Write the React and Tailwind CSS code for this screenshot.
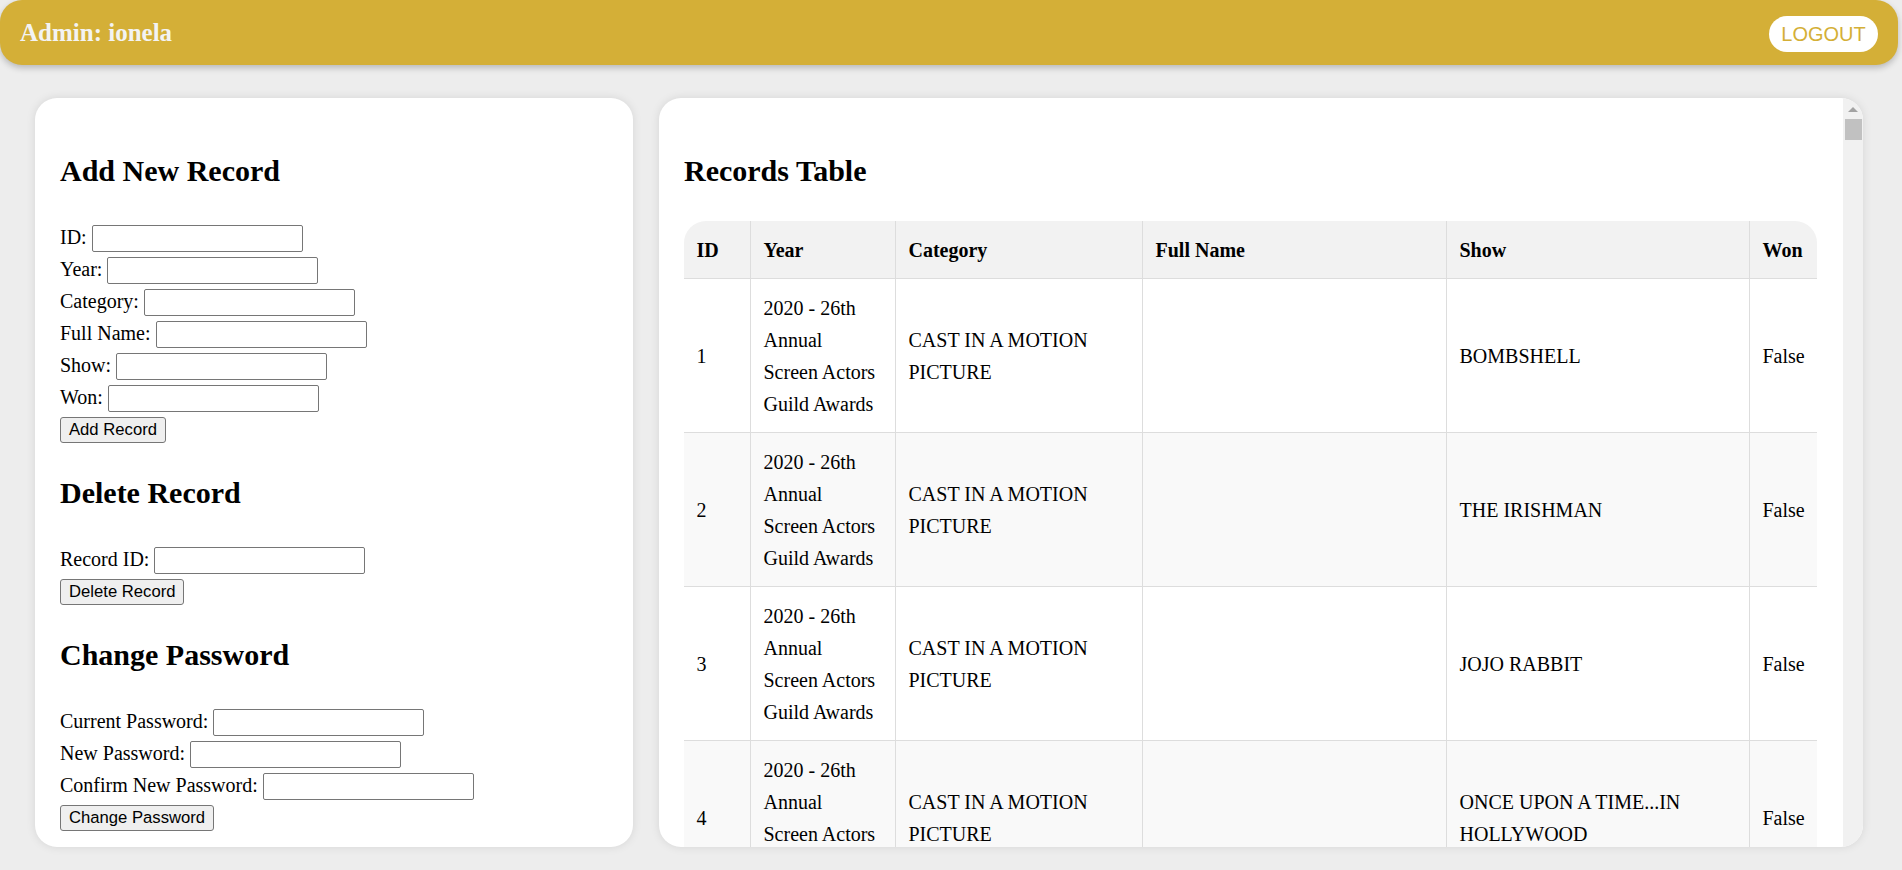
import React from "react";

const CEREMONY = "2020 - 26th Annual Screen Actors Guild Awards";

const raw = [
  ["CAST IN A MOTION PICTURE", "", "BOMBSHELL", "False"],
  ["CAST IN A MOTION PICTURE", "", "THE IRISHMAN", "False"],
  ["CAST IN A MOTION PICTURE", "", "JOJO RABBIT", "False"],
  ["CAST IN A MOTION PICTURE", "", "ONCE UPON A TIME...IN HOLLYWOOD", "False"],
  ["CAST IN A MOTION PICTURE", "", "PARASITE", "True"],
  ["MALE ACTOR IN A LEADING ROLE", "Christian Bale", "Ford v Ferrari", "False"],
  ["MALE ACTOR IN A LEADING ROLE", "Leonardo DiCaprio", "Once Upon a Time...in Hollywood", "False"],
  ["MALE ACTOR IN A LEADING ROLE", "Adam Driver", "Marriage Story", "False"],
  ["MALE ACTOR IN A LEADING ROLE", "Taron Egerton", "Rocketman", "False"],
  ["MALE ACTOR IN A LEADING ROLE", "Joaquin Phoenix", "Joker", "True"],
  ["FEMALE ACTOR IN A LEADING ROLE", "Cynthia Erivo", "Harriet", "False"],
  ["FEMALE ACTOR IN A LEADING ROLE", "Scarlett Johansson", "Marriage Story", "False"],
  ["FEMALE ACTOR IN A LEADING ROLE", "Lupita Nyong'o", "Us", "False"],
  ["FEMALE ACTOR IN A LEADING ROLE", "Charlize Theron", "Bombshell", "False"],
  ["FEMALE ACTOR IN A LEADING ROLE", "Renée Zellweger", "Judy", "True"],
  ["MALE ACTOR IN A SUPPORTING ROLE", "Jamie Foxx", "Just Mercy", "False"],
  ["MALE ACTOR IN A SUPPORTING ROLE", "Tom Hanks", "A Beautiful Day in the Neighborhood", "False"],
  ["MALE ACTOR IN A SUPPORTING ROLE", "Al Pacino", "The Irishman", "False"],
  ["MALE ACTOR IN A SUPPORTING ROLE", "Joe Pesci", "The Irishman", "False"],
  ["MALE ACTOR IN A SUPPORTING ROLE", "Brad Pitt", "Once Upon a Time...in Hollywood", "True"],
  ["FEMALE ACTOR IN A SUPPORTING ROLE", "Laura Dern", "Marriage Story", "True"],
  ["FEMALE ACTOR IN A SUPPORTING ROLE", "Scarlett Johansson", "Jojo Rabbit", "False"],
  ["FEMALE ACTOR IN A SUPPORTING ROLE", "Nicole Kidman", "Bombshell", "False"],
  ["FEMALE ACTOR IN A SUPPORTING ROLE", "Jennifer Lopez", "Hustlers", "False"],
  ["FEMALE ACTOR IN A SUPPORTING ROLE", "Margot Robbie", "Bombshell", "False"],
  ["STUNT ENSEMBLE IN A MOTION PICTURE", "", "AVENGERS: ENDGAME", "True"],
  ["STUNT ENSEMBLE IN A MOTION PICTURE", "", "FORD V FERRARI", "False"],
  ["STUNT ENSEMBLE IN A MOTION PICTURE", "", "THE IRISHMAN", "False"],
  ["STUNT ENSEMBLE IN A MOTION PICTURE", "", "JOKER", "False"],
  ["STUNT ENSEMBLE IN A MOTION PICTURE", "", "ONCE UPON A TIME...IN HOLLYWOOD", "False"],
];

const rows = raw.map((r, i) => ({
  id: i + 1,
  year: CEREMONY,
  category: r[0],
  name: r[1],
  show: r[2],
  won: r[3],
}));

const Field = ({ label }) => (
  <div className="flex h-[32px] items-center gap-[5px]">
    <span className="whitespace-nowrap pb-[3px]">{label}</span>
    <input
      type="text"
      className="h-[27px] w-[211px] rounded-[2px] border border-[#767676] bg-white px-[2px] outline-none"
    />
  </div>
);

const Btn = ({ children }) => (
  <div className="flex h-[32px] items-center">
    <button className="h-[26px] rounded-[3px] border border-[#767676] bg-[#efefef] px-[8px] font-['Liberation_Sans',Arial,sans-serif] text-[16.67px] leading-none text-black">
      {children}
    </button>
  </div>
);

const H2 = ({ children, first }) => (
  <h2
    className={
      first
        ? "mt-[56px] mb-[34px] text-[30px] font-bold leading-[34px]"
        : "mt-[30px] mb-[34px] text-[30px] font-bold leading-[34px]"
    }
  >
    {children}
  </h2>
);

const headers = ["ID", "Year", "Category", "Full Name", "Show", "Won"];
const widths = [66, 145, 247, 304, 303, 68];

const cellPad = (i) =>
  i === 1 ? "pl-[12.5px] pr-[18px] py-[12.5px]" : "px-[12.5px] py-[12.5px]";

export default function App() {
  return (
    <div className="h-[870px] w-[1902px] overflow-hidden bg-[#ededed] font-['Liberation_Serif','Times_New_Roman',serif] text-[20px] text-black">
      <header className="flex h-[65px] w-[1898px] items-center justify-between rounded-[22px] bg-[#d4af37] pl-[20px] pr-[20px] shadow-[0_3px_6px_rgba(0,0,0,0.22)]">
        <span className="text-[25px] font-bold text-[#f3f3f3]">Admin: ionela</span>
        <button className="mt-[3px] h-[36px] w-[109px] rounded-full bg-white font-['Liberation_Sans',Arial,sans-serif] text-[20px] text-[#d4af37]">
          LOGOUT
        </button>
      </header>

      <main className="mt-[33px] flex gap-[26px] pl-[35px]">
        <section className="h-[749px] w-[598px] shrink-0 rounded-[22px] bg-white px-[25px] shadow-[0_0_10px_rgba(0,0,0,0.1)]">
          <H2 first>Add New Record</H2>
          <Field label="ID:" />
          <Field label="Year:" />
          <Field label="Category:" />
          <Field label="Full Name:" />
          <Field label="Show:" />
          <Field label="Won:" />
          <Btn>Add Record</Btn>

          <H2>Delete Record</H2>
          <Field label="Record ID:" />
          <Btn>Delete Record</Btn>

          <H2>Change Password</H2>
          <Field label="Current Password:" />
          <Field label="New Password:" />
          <Field label="Confirm New Password:" />
          <Btn>Change Password</Btn>
        </section>

        <section className="flex h-[749px] w-[1204px] shrink-0 overflow-hidden rounded-[22px] bg-white shadow-[0_0_10px_rgba(0,0,0,0.1)]">
          <div className="h-full flex-1 overflow-hidden px-[25px]">
            <h2 className="mt-[56px] mb-[33px] text-[30px] font-bold leading-[34px]">Records Table</h2>
            <table className="w-[1133px] table-fixed border-separate border-spacing-0">
              <colgroup>
                {widths.map((w, i) => (
                  <col key={i} style={{ width: w }} />
                ))}
              </colgroup>
              <thead>
                <tr>
                  {headers.map((h, i) => (
                    <th
                      key={h}
                      className={
                        "border-b border-[#dddddd] bg-[#f2f2f2] text-left align-middle font-bold leading-[32px] " +
                        cellPad(i) +
                        (i > 0 ? " border-l" : "") +
                        (i === 0 ? " rounded-tl-[22px]" : "") +
                        (i === headers.length - 1 ? " rounded-tr-[22px]" : "")
                      }
                    >
                      {h}
                    </th>
                  ))}
                </tr>
              </thead>
              <tbody>
                {rows.map((r, ri) => {
                  const cells = [r.id, r.year, r.category, r.name, r.show, r.won];
                  return (
                    <tr key={r.id} className={ri % 2 === 1 ? "bg-[#f9f9f9]" : "bg-white"}>
                      {cells.map((c, i) => (
                        <td
                          key={i}
                          className={
                            "border-b border-[#dddddd] align-middle leading-[32px] " +
                            cellPad(i) +
                            (i > 0 ? " border-l" : "")
                          }
                        >
                          {c}
                        </td>
                      ))}
                    </tr>
                  );
                })}
              </tbody>
            </table>
          </div>

          <div className="flex h-full w-[20px] shrink-0 flex-col items-center bg-[#f1f1f1]">
            <div className="mt-[9px] h-0 w-0 border-x-[5px] border-b-[5px] border-x-transparent border-b-[#a3a3a3]" />
            <div className="mt-[7px] h-[21px] w-[17px] bg-[#c1c1c1]" />
          </div>
        </section>
      </main>
    </div>
  );
}
